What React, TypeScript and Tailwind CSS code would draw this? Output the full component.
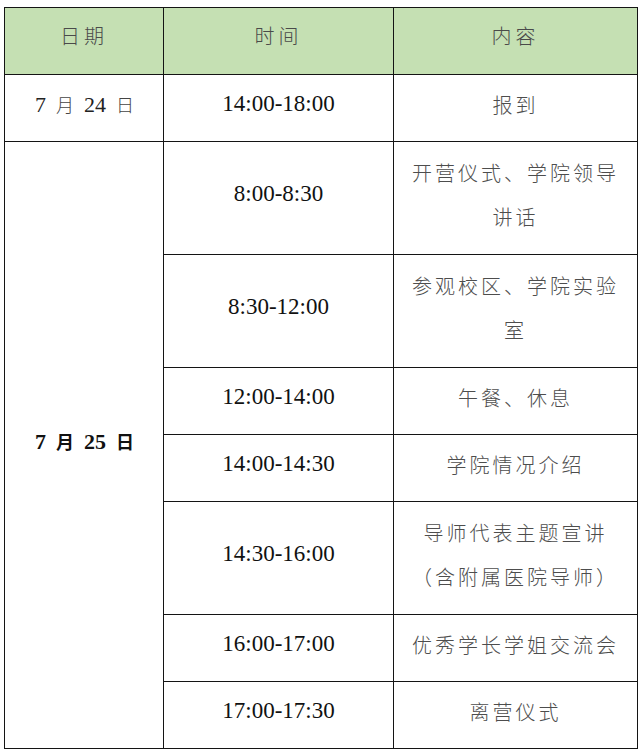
const serif = "font-['Liberation_Serif','Noto_Sans_CJK_SC',serif]"
const cjk = "font-['Noto_Sans_CJK_SC',sans-serif]"

type Row = { time: string; content: string[]; tall?: boolean }

const rows: Row[] = [
  { time: "8:00-8:30", content: ["开营仪式、学院领导", "讲话"], tall: true },
  { time: "8:30-12:00", content: ["参观校区、学院实验", "室"], tall: true },
  { time: "12:00-14:00", content: ["午餐、休息"] },
  { time: "14:00-14:30", content: ["学院情况介绍"] },
  { time: "14:30-16:00", content: ["导师代表主题宣讲", "（含附属医院导师）"], tall: true },
  { time: "16:00-17:00", content: ["优秀学长学姐交流会"] },
  { time: "17:00-17:30", content: ["离营仪式"] },
]

function Content({ lines }: { lines: string[] }) {
  return (
    <div className={`${cjk} text-[20px] font-light tracking-[3px] text-[#4d4d4d] leading-[44px] whitespace-nowrap`}>
      {lines.map((l, i) => (
        <div key={i}>{l}</div>
      ))}
    </div>
  )
}

function DateLabel({ day, bold }: { day: string; bold?: boolean }) {
  return (
    <div className={`flex items-baseline justify-center pl-[1px] ${bold ? "font-bold text-[#111]" : "text-[#222]"}`}>
      <span className="text-[22px]">7</span>
      <span className={`${cjk} text-[18px] ml-[10px] mr-[10px] ${bold ? "" : "font-light text-[#444]"}`}>月</span>
      <span className="text-[22px]">{day}</span>
      <span className={`${cjk} text-[18px] ml-[10px] ${bold ? "" : "font-light text-[#444]"}`}>日</span>
    </div>
  )
}

const cell = "border border-[#141414] pb-[7px]"

export default function App() {
  return (
    <div className="w-[640px] h-[753px] bg-white pt-[7px] pl-[4px]">
      <table className="w-[633px] table-fixed border-collapse text-center">
        <colgroup>
          <col className="w-[159px]" />
          <col className="w-[230px]" />
          <col className="w-[244px]" />
        </colgroup>
        <thead>
          <tr className="h-[67px] bg-[#c5e0b3]">
            <th className={`${cjk} border border-[#141414] pb-[10px] font-light text-[20px] tracking-[4px] text-[#4a4a4a]`}>日期</th>
            <th className={`${cjk} border border-[#141414] pb-[10px] font-light text-[20px] tracking-[4px] text-[#4a4a4a]`}>时间</th>
            <th className={`${cjk} border border-[#141414] pb-[10px] font-light text-[20px] tracking-[4px] text-[#4a4a4a]`}>内容</th>
          </tr>
        </thead>
        <tbody>
          <tr className="h-[67px]">
            <td className={`${serif} ${cell}`}>
              <DateLabel day="24" />
            </td>
            <td className={`${serif} ${cell} text-[23px] text-[#111]`}>14:00-18:00</td>
            <td className={cell}>
              <Content lines={["报到"]} />
            </td>
          </tr>
          {rows.map((r, i) => (
            <tr key={r.time} className={r.tall ? "h-[113px]" : "h-[67px]"}>
              {i === 0 && (
                <td rowSpan={rows.length} className={`${serif} ${cell}`}>
                  <DateLabel day="25" bold />
                </td>
              )}
              <td className={`${serif} ${cell} text-[23px] text-[#111]`}>{r.time}</td>
              <td className={cell}>
                <Content lines={r.content} />
              </td>
            </tr>
          ))}
        </tbody>
      </table>
    </div>
  )
}
